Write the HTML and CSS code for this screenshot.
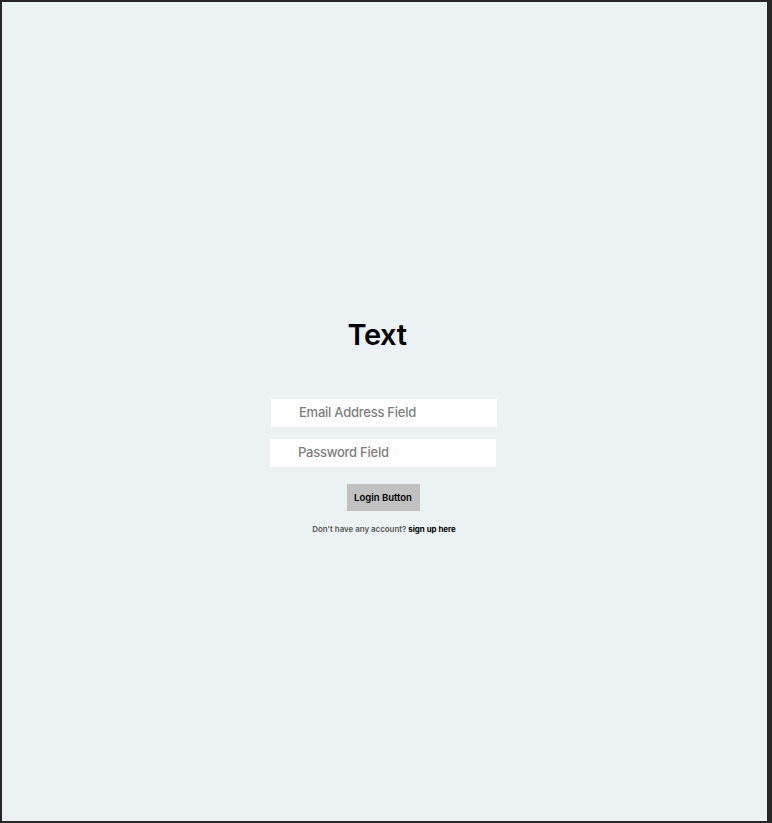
FILE: index.html
```html
<!DOCTYPE html>
<html lang="en">
<head>
<meta charset="utf-8">
<title>Login</title>
<link rel="stylesheet" href="styles.css">
</head>
<body>
<main class="screen">
  <section class="login">
    <h1 class="title">Text</h1>
    <div class="field field-email">Email Address Field</div>
    <div class="field field-password">Password Field</div>
    <button class="login-btn" type="button">Login Button</button>
    <p class="signup">Don't have any account? <a class="signup-link" href="#">sign up here</a></p>
  </section>
</main>
</body>
</html>
```
FILE: styles.css
```css
html, body {
  margin: 0;
  padding: 0;
  background: #262626;
}
body {
  font-family: Inter, "Noto Sans", sans-serif;
  width: 772px;
  height: 823px;
  overflow: hidden;
}
.screen {
  margin: 2px 5px 2px 2px;
  height: 819px;
  background: #ecf1f3;
  display: flex;
  justify-content: center;
}
.login {
  display: flex;
  flex-direction: column;
  align-items: center;
  padding-top: 314px;
  padding-right: 1px;
}
.title {
  margin: 0 14px 0 0;
  font-size: 29px;
  line-height: 38px;
  font-weight: 600;
  color: #000;
  letter-spacing: -0.4px;
}
.field {
  width: 198px;
  height: 28px;
  padding-left: 28px;
  background: #fff;
  color: #7e7e7e;
  font-size: 13px;
  line-height: 27px;
  font-weight: 500;
  letter-spacing: -0.25px;
}
.field-email {
  margin-top: 45px;
}
.field-password {
  margin-top: 12px;
  margin-right: 2px;
}
.login-btn {
  margin-top: 17px;
  margin-right: 2px;
  width: 73px;
  height: 27px;
  border: none;
  padding: 0;
  background: #c1c1c1;
  color: #000;
  font-family: inherit;
  font-size: 9.5px;
  font-weight: 600;
}
.signup {
  margin: 12px 0 0;
  font-size: 7.9px;
  line-height: 12px;
  font-weight: 600;
  color: #555;
}
.signup-link {
  color: #000;
  text-decoration: none;
  font-weight: 700;
}
```
